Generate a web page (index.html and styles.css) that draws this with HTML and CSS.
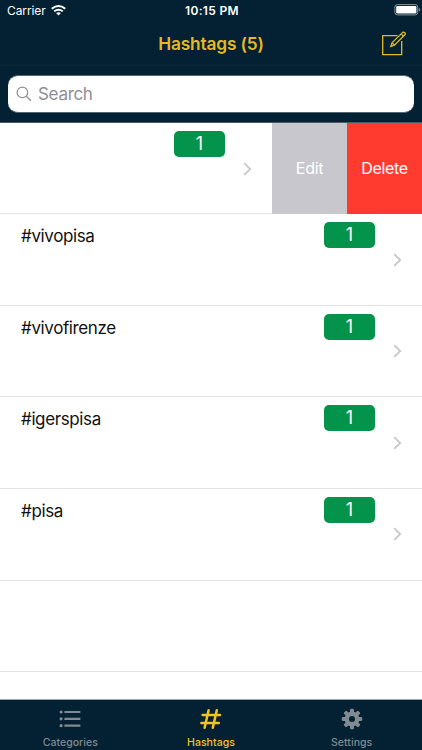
FILE: index.html
```
<!DOCTYPE html>
<html lang="en">
<head>
<meta charset="utf-8">
<meta name="viewport" content="width=device-width, initial-scale=1">
<title>Hashtags</title>
<link rel="stylesheet" href="styles.css">
</head>
<body>
<div class="app">
  <div class="status">
    <div class="carrier"><span>Carrier</span>
      <svg width="15" height="11" viewBox="0 0 14 11" preserveAspectRatio="none" fill="none" stroke="#fff" stroke-width="1.9"><path d="M.7 3.8Q7-1.6 13.3 3.8M3 6.4Q7 3 11 6.4"/><path d="M4.8 8.1Q7 6.3 9.2 8.1L7 10.5Z" fill="#fff" stroke="none"/></svg>
    </div>
    <span class="time">10:15 PM</span>
    <svg class="battery" width="27" height="12" viewBox="0 0 27 12"><rect x=".9" y=".6" width="22.8" height="10.3" rx="2.5" fill="none" stroke="#8b969d"/><rect x="2.2" y="1.9" width="20.2" height="7.7" rx="1.3" fill="#fff"/><path d="M24.8 4Q26.3 4.5 26.3 5.8T24.8 7.6Z" fill="#8b969d"/></svg>
  </div>
  <header class="nav">
    <h1>Hashtags (5)</h1>
    <svg class="compose" width="26" height="26" viewBox="0 0 26 26" fill="none" stroke="#e3b927" stroke-width="1.3"><path d="M16.5 4.7H1.7V23.7H20.7V10"/><path d="M9.8 15.5L11 11.8L21.7 1.4Q22.8.7 23.8 1.7T23.9 3.7L13.4 14.1ZM20.1 2.9L22.5 5.3M11 11.8L13.4 14.1"/></svg>
  </header>
  <div class="searchbar"><div class="field">
    <svg width="16" height="16" viewBox="0 0 16 16" fill="none" stroke="#8e8e93" stroke-width="1.2"><circle cx="6.4" cy="6.4" r="5.3"/><path d="M10.3 10.3L15 14.8"/></svg>
    <span>Search</span>
  </div></div>
  <main class="list">
    <div class="row swiped">
      <div class="content"><span class="badge">1</span><svg class="chevron" width="9" height="14" viewBox="0 0 9 14"><path d="M1.2 1.2L7.2 7L1.2 12.8"/></svg></div>
      <div class="action edit">Edit</div><div class="action delete">Delete</div>
    </div>
    <div class="row"><span class="name">#vivopisa</span><span class="badge">1</span><svg class="chevron" width="9" height="14" viewBox="0 0 9 14"><path d="M1.2 1.2L7.2 7L1.2 12.8"/></svg></div>
    <div class="row"><span class="name">#vivofirenze</span><span class="badge">1</span><svg class="chevron" width="9" height="14" viewBox="0 0 9 14"><path d="M1.2 1.2L7.2 7L1.2 12.8"/></svg></div>
    <div class="row"><span class="name">#igerspisa</span><span class="badge">1</span><svg class="chevron" width="9" height="14" viewBox="0 0 9 14"><path d="M1.2 1.2L7.2 7L1.2 12.8"/></svg></div>
    <div class="row"><span class="name">#pisa</span><span class="badge">1</span><svg class="chevron" width="9" height="14" viewBox="0 0 9 14"><path d="M1.2 1.2L7.2 7L1.2 12.8"/></svg></div>
    <div class="row"></div>
  </main>
  <nav class="tabs">
    <div class="tab">
      <svg width="22" height="22" viewBox="0 0 22 22" fill="#818a90"><circle cx="2.1" cy="4" r="1.6"/><circle cx="2.1" cy="10.8" r="1.6"/><circle cx="2.1" cy="17.7" r="1.6"/><path d="M5.4 2.9H21.4V5.1H5.4ZM5.4 9.7H21.4V11.9H5.4ZM5.4 16.6H21.4V18.8H5.4Z"/></svg>
      <span>Categories</span>
    </div>
    <div class="tab active">
      <svg width="22" height="22" viewBox="0 0 22 22" fill="none" stroke="#f3c322" stroke-width="2.5" stroke-linecap="round"><path d="M8.6 2.2L4.6 19.8M16.8 2.2L12.8 19.8M2.6 7H20M1.4 15H18.8"/></svg>
      <span>Hashtags</span>
    </div>
    <div class="tab">
      <svg width="22" height="22" viewBox="0 0 22 22"><g fill="#818a90" transform="translate(11 11)"><g id="teeth"><rect x="-2" y="-10.2" width="4" height="20.4" rx="1.2"/><rect x="-10.2" y="-2" width="20.4" height="4" rx="1.2"/></g><use href="#teeth" transform="rotate(45)"/><circle r="7.4"/></g><circle cx="11" cy="11" r="3" fill="#032133"/></svg>
      <span>Settings</span>
    </div>
  </nav>
</div>
</body>
</html>
```
FILE: styles.css
```
* { box-sizing: border-box; }
body { margin: 0; font-family: Inter, "Liberation Sans", sans-serif; background: #fff; }
svg { display: block; flex: none; }
.app { width: 422px; height: 750px; display: flex; flex-direction: column; overflow: hidden; }
.status { height: 22px; flex: none; background: #032133; color: #fff; display: grid; grid-template-columns: 1fr auto 1fr; font-size: 12px; line-height: 22px; }
.carrier { display: flex; gap: 5px; padding-left: 7px; letter-spacing: -.1px; }
.carrier svg { margin-top: 5px; }
.time { font-weight: 600; font-size: 12px; letter-spacing: .35px; padding-left: 2px; }
.battery { justify-self: end; margin: 4px 1px 0 0; }
.nav { height: 44px; flex: none; background: #032133; border-bottom: 1px solid #0b2636; display: grid; grid-template-columns: 1fr auto 1fr; }
h1 { grid-column: 2; margin: 0; color: #e3b927; font-size: 17.3px; font-weight: 600; line-height: 43px; letter-spacing: -.15px; }
.compose { justify-self: end; margin: 9px 15px 0 0; }
.searchbar { height: 57px; flex: none; background: #032133; padding: 9px 8px 0; border-bottom: 1px solid #4b5962; }
.field { height: 38px; border-radius: 10px; background: #fff; border: 1px solid #536874; border-width: 1px 0; display: flex; align-items: center; gap: 6px; padding-left: 8px; color: #8e8e93; font-size: 17px; letter-spacing: -.3px; }
.list { flex: 1; min-height: 0; overflow: hidden; }
.row { height: 91.65px; border-bottom: 1px solid #e3e3e5; display: grid; grid-template-columns: 1fr 51px 47px; align-items: start; }
.name { padding-left: 21px; margin-top: 10px; font-size: 17px; line-height: 24px; letter-spacing: -.38px; color: #111; }
.badge { margin-top: 8px; height: 26px; border-radius: 5px; background: #03934a; color: #fff; font-size: 18px; line-height: 26px; text-align: center; }
.chevron { margin: 38.5px 0 0 17.5px; fill: none; stroke: #c7c7cc; stroke-width: 1.8; }
.row.swiped { grid-template-columns: 272px 75px 75px; align-items: stretch; height: 91px; border: 0; }
.content { display: grid; grid-template-columns: 51px 47px; justify-content: end; align-items: start; border-bottom: 1px solid #e3e3e5; }
.action { display: flex; align-items: center; justify-content: center; color: #fff; font-size: 16px; letter-spacing: -.3px; padding-bottom: 1px; }
.edit { background: #c8c7cd; }
.delete { background: #ff3b30; }
.tabs { height: 51px; flex: none; border-top: 1px solid #9da5a9; background: #032133; display: grid; grid-template-columns: 1fr 1fr 1fr; }
.tab { display: flex; flex-direction: column; align-items: center; padding-top: 8px; color: #818a90; font-size: 10.5px; font-weight: 500; line-height: 14px; gap: 6px; letter-spacing: .05px; }
.active { color: #f3c322; }
```
